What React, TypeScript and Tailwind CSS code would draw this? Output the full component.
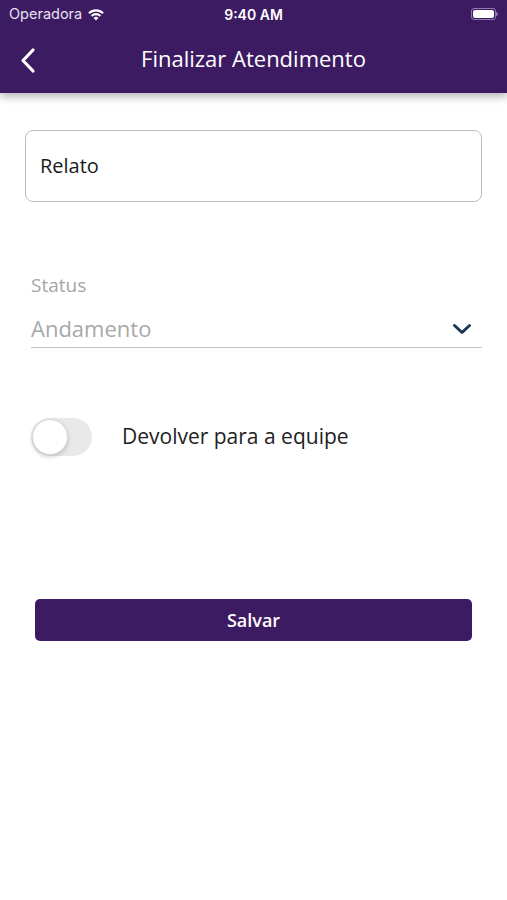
import { useState } from 'react';

function Wifi() {
  return (
    <svg width="18" height="13" viewBox="0 0 18 13" className="ml-[5px]">
      <path d="M9 12.5 L6.6 9.9 A3.4 3.4 0 0 1 11.4 9.9 Z" fill="#fff" />
      <path d="M3.9 7.2 A7.3 7.3 0 0 1 14.1 7.2 L12.6 8.7 A5.2 5.2 0 0 0 5.4 8.7 Z" fill="#fff" />
      <path d="M1.2 4.5 A11.2 11.2 0 0 1 16.8 4.5 L15.3 6 A9.1 9.1 0 0 0 2.7 6 Z" fill="#fff" />
    </svg>
  );
}

function Battery() {
  return (
    <div className="flex items-center">
      <div className="w-[25px] h-[12px] rounded-[3px] border border-[#8e78ad] p-[1px]">
        <div className="w-full h-full rounded-[2px] bg-white" />
      </div>
      <div className="w-[2px] h-[4px] rounded-r-sm bg-[#8e78ad]" />
    </div>
  );
}

export default function App() {
  const [on, setOn] = useState(false);
  return (
    <div className="min-h-screen bg-white flex flex-col" style={{ fontFamily: '"Open Sans", "Noto Sans", sans-serif' }}>
      <div className="bg-[#3d1b63] shadow-[0_4px_8px_rgba(0,0,0,0.28)] relative z-10">
        <div className="h-[28px] flex items-center justify-between px-[9px] text-white text-[14.5px]" style={{ fontFamily: 'Inter, Roboto, sans-serif' }}>
          <div className="flex items-center w-[150px]">
            <span className="text-[#e8e0f0]">Operadora</span>
            <Wifi />
          </div>
          <span className="font-semibold text-[14px]">9:40 AM</span>
          <div className="w-[150px] flex justify-end">
            <Battery />
          </div>
        </div>
        <div className="h-[65px] flex items-center relative">
          <button className="absolute left-[15px] top-[15px] p-1">
            <svg width="18" height="27" viewBox="0 0 18 27">
              <path d="M14 3 L4 13.5 L14 24" stroke="#fff" strokeWidth="3.2" fill="none" strokeLinecap="round" strokeLinejoin="round" />
            </svg>
          </button>
          <h1 className="w-full text-center text-white text-[22px] -mt-[4px]">Finalizar Atendimento</h1>
        </div>
      </div>

      <div className="flex flex-col px-[25px] pt-[37px]">
        <div className="h-[72px] rounded-[8px] border border-[#bdbdbd] flex items-center px-[14px]">
          <span className="text-[20px] text-[#1a1a1a]">Relato</span>
        </div>

        <div className="mt-[71px] pl-[6px]">
          <div className="text-[19px] text-[#a5a5a5] leading-[24px]">Status</div>
          <div className="flex items-end justify-between border-b border-[#c4c4c4] h-[51px] pb-[4px]">
            <span className="text-[22px] text-[#a8a8a8] leading-[30px]">Andamento</span>
            <svg width="20" height="12" viewBox="0 0 20 12" className="mr-[10px] mb-[8px]">
              <path d="M2.5 2.5 L10 9.5 L17.5 2.5" stroke="#1e3555" strokeWidth="3" fill="none" strokeLinecap="round" strokeLinejoin="round" />
            </svg>
          </div>
        </div>

        <div className="mt-[70px] px-[6px] flex items-center">
          <button
            onClick={() => setOn(!on)}
            className={`w-[61px] h-[38px] rounded-full p-[1px] flex items-center ${on ? 'bg-[#3d1b63] justify-end' : 'bg-[#e9e9ea] justify-start'}`}
          >
            <span className="w-[36px] h-[36px] rounded-full bg-white border border-[#d6d6d6] shadow-[0_2px_4px_rgba(0,0,0,0.18)]" />
          </button>
          <span className="ml-[30px] text-[21px] text-[#222]">Devolver para a equipe</span>
        </div>

        <div className="mt-[143px] px-[10px]">
          <button className="w-full h-[42px] rounded-[5px] bg-[#3d1b63] text-white font-semibold text-[18px]">
            Salvar
          </button>
        </div>
      </div>
    </div>
  );
}
